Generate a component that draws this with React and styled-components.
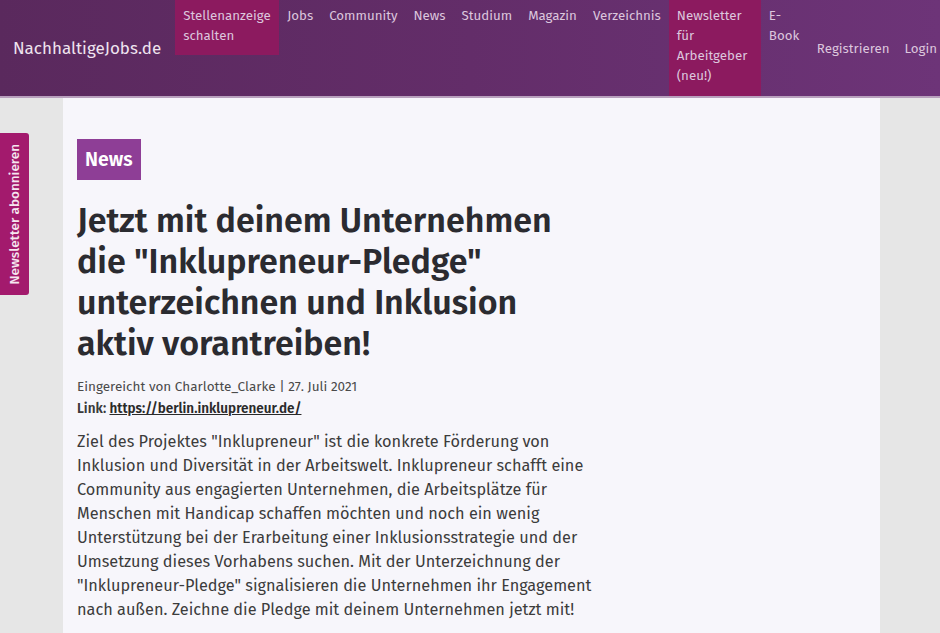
import React from "react";
import styled, { createGlobalStyle } from "styled-components";

const GlobalStyle = createGlobalStyle`
	html, body {
		margin: 0;
		padding: 0;
		background: #e6e6e6;
		font-family: "Fira Sans", Lato, "Noto Sans", sans-serif;
	}
`;

const navItems = [
	{ label: "Stellenanzeige schalten", highlight: true, w: 104 },
	{ label: "Jobs" },
	{ label: "Community" },
	{ label: "News" },
	{ label: "Studium" },
	{ label: "Magazin" },
	{ label: "Verzeichnis" },
	{ label: "Newsletter für Arbeitgeber (neu!)", highlight: true, w: 92 },
	{ label: "E-Book", w: 44 },
];

const App = () => {
	return (
		<>
			<GlobalStyle />
			<Header>
				<Logo>NachhaltigeJobs.de</Logo>
				<Nav>
					{navItems.map((item) => (
						<NavItem key={item.label} $highlight={item.highlight} $w={item.w}>
							{item.label}
						</NavItem>
					))}
				</Nav>
				<UserNav>
					<UserLink>Registrieren</UserLink>
					<UserLink $last>Login</UserLink>
				</UserNav>
			</Header>
			<Page>
				<Main>
					<Badge>News</Badge>
					<Title>
						Jetzt mit deinem Unternehmen die "Inklupreneur-Pledge"
						unterzeichnen und Inklusion aktiv vorantreiben!
					</Title>
					<Meta>Eingereicht von Charlotte_Clarke | 27. Juli 2021</Meta>
					<LinkLine>
						Link: <a href="#">https://berlin.inklupreneur.de/</a>
					</LinkLine>
					<Body>
						Ziel des Projektes "Inklupreneur" ist die konkrete Förderung von
						Inklusion und Diversität in der Arbeitswelt. Inklupreneur schafft
						eine Community aus engagierten Unternehmen, die Arbeitsplätze für
						Menschen mit Handicap schaffen möchten und noch ein wenig
						Unterstützung bei der Erarbeitung einer Inklusionsstrategie und der
						Umsetzung dieses Vorhabens suchen. Mit der Unterzeichnung der
						"Inklupreneur-Pledge" signalisieren die Unternehmen ihr Engagement
						nach außen. Zeichne die Pledge mit deinem Unternehmen jetzt mit!
					</Body>
				</Main>
			</Page>
			<SideTab>
				<SideTabText>Newsletter abonnieren</SideTabText>
			</SideTab>
		</>
	);
};

export default App;

const Header = styled.header`
	display: flex;
	align-items: stretch;
	background: linear-gradient(90deg, #5a295d 0%, #632d69 50%, #6d3478 100%);
	border-bottom: 2px solid #b8a0bd;
	box-sizing: border-box;
	height: 98px;
`;

const Logo = styled.div`
	align-self: center;
	padding: 0 14px 0 13px;
	font-size: 17px;
	color: #efe4ef;
	white-space: nowrap;
`;

const Nav = styled.nav`
	display: flex;
	align-items: flex-start;
`;

const NavItem = styled.div`
	box-sizing: border-box;
	padding: 6px 8px 9px;
	font-size: 13.3px;
	line-height: 20px;
	color: #dcc6dd;
	white-space: ${(p) => (p.$w ? "normal" : "nowrap")};
	width: ${(p) => (p.$w ? `${p.$w}px` : "auto")};
	background: ${(p) => (p.$highlight ? "#8c1a5f" : "transparent")};
	align-self: ${(p) => (p.$highlight && p.$w < 100 ? "stretch" : "flex-start")};
`;

const UserNav = styled.div`
	display: flex;
	align-items: center;
	margin-left: auto;
	padding-top: 2px;
`;

const UserLink = styled.div`
	padding: 0 ${(p) => (p.$last ? "3px" : "7px")} 0 8px;
	font-size: 13.3px;
	color: #dcc6dd;
	white-space: nowrap;
`;

const Page = styled.div`
	display: flex;
	min-height: calc(100vh - 98px);
`;

const Main = styled.main`
	margin-left: 63px;
	width: 817px;
	box-sizing: border-box;
	padding: 41px 14px 20px;
	background: #f7f6fb;
`;

const Badge = styled.div`
	display: inline-block;
	padding: 0 8px;
	height: 41px;
	line-height: 41px;
	background: #8e3e96;
	color: #ffffff;
	font-size: 19.5px;
	font-weight: 600;
`;

const Title = styled.h1`
	width: 520px;
	margin: 20px 0 12px;
	font-size: 34px;
	line-height: 41px;
	font-weight: 600;
	color: #2b2b30;
`;

const Meta = styled.div`
	font-size: 13.5px;
	line-height: 22px;
	color: #4a4a4a;
`;

const LinkLine = styled.div`
	font-size: 13.5px;
	line-height: 22px;
	font-weight: 600;
	color: #3a3a3a;

	a {
		color: #2a2a2a;
		text-decoration: underline;
	}
`;

const Body = styled.p`
	width: 530px;
	margin: 10px 0 0;
	font-size: 16.3px;
	line-height: 24px;
	color: #3c3c3c;
`;

const SideTab = styled.div`
	position: fixed;
	left: 0;
	top: 133px;
	width: 29px;
	height: 162px;
	background: #a31a6d;
	border-radius: 0 3px 3px 0;
	display: flex;
	align-items: center;
	justify-content: center;
`;

const SideTabText = styled.span`
	writing-mode: vertical-rl;
	transform: rotate(180deg);
	font-size: 13.5px;
	font-weight: 500;
	color: #f6e6f0;
	white-space: nowrap;
`;
